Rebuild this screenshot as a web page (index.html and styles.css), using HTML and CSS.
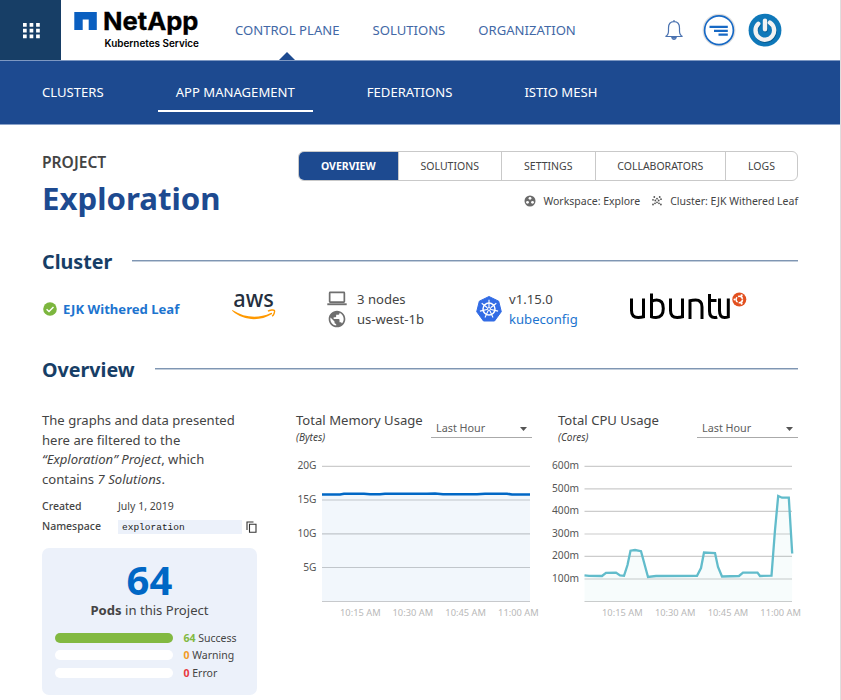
FILE: index.html
```html
<!DOCTYPE html>
<html lang="en">
<head>
<meta charset="utf-8">
<title>Exploration – NetApp Kubernetes Service</title>
<link rel="stylesheet" href="styles.css">
</head>
<body>
<div class="page">
  <header class="topbar">
    <div class="launcher">
      <svg width="17" height="16" viewBox="0 0 17 16" fill="#fff"><path d="M0 0h3.700v3.700H0zM6.600 0h3.700v3.700H6.600zM13.100 0h3.700v3.700h-3.700zM0 5.800h3.700v3.700H0zM6.600 5.800h3.700v3.700H6.600zM13.100 5.800h3.700v3.700h-3.700zM0 11.600h3.700v3.700H0zM6.600 11.600h3.700v3.700H6.600zM13.100 11.600h3.700v3.700h-3.700z"/></svg>
    </div>
    <svg class="brand" width="128" height="52" viewBox="74 0 128 52">
      <path d="M74.300 12h22.500v18H88.700V19.500H82.700V30H74.300z" fill="#0a5fc0"/>
      <text x="103" y="30.300" class="brand-name" textLength="95.500" lengthAdjust="spacingAndGlyphs">NetApp</text>
      <text x="104.500" y="47.300" class="brand-sub" textLength="94.500" lengthAdjust="spacingAndGlyphs">Kubernetes Service</text>
    </svg>
    <nav class="primary">
      <a class="current">CONTROL PLANE</a><a>SOLUTIONS</a><a>ORGANIZATION</a>
    </nav>
    <div class="tools">
      <svg width="20" height="22" viewBox="664 20 20 22" fill="none" stroke="#4a72b0" stroke-width="1.200"><path d="M674 21v2M665.500 37.500c2-1 3-3 3-5.500v-3c0-4 2-6.300 5.500-6.300s5.500 2.300 5.500 6.300v3c0 2.500 1 4.500 3 5.500z"/><path d="M671.800 38.500c.3 2.600 4.100 2.600 4.400 0z" fill="#7f9bc8"/></svg>
      <svg width="34" height="34" viewBox="702 13 34 34"><circle cx="719" cy="30.200" r="15.700" fill="none" stroke="#dedede" stroke-width="1.500"/><circle cx="719" cy="30.200" r="14.400" fill="#fff" stroke="#1769c5" stroke-width="1.700"/><path d="M709.500 26.800h18.300M714 30.800h13.800M718.500 34.700h9.300" stroke="#1769c5" stroke-width="2.200"/></svg>
      <svg width="34" height="34" viewBox="748 13 34 34" fill="none"><circle cx="765" cy="30.200" r="16.400" fill="#0f78b9"/><path d="M758.300 23.800a9.300 9.300 0 1 0 11.600-1.200M765 20.600v8.600" transform="translate(.6 1)" stroke="#075b91" stroke-width="4.400" stroke-linecap="round"/><path d="M758.300 23.800a9.300 9.300 0 1 0 11.600-1.200M765 20.600v8.600" stroke="#f2f2f2" stroke-width="4.400" stroke-linecap="round"/></svg>
    </div>
  </header>
  <nav class="secondary">
    <a>CLUSTERS</a><a class="active">APP MANAGEMENT</a><a>FEDERATIONS</a><a>ISTIO MESH</a>
  </nav>

  <main>
    <section class="project">
      <div class="project-title">
        <div class="kicker">PROJECT</div>
        <h1>Exploration</h1>
      </div>
      <div class="project-side">
        <div class="tabs"><a class="on">OVERVIEW</a><a>SOLUTIONS</a><a>SETTINGS</a><a>COLLABORATORS</a><a>LOGS</a></div>
        <div class="meta">
          <svg width="12" height="12" viewBox="0 0 12 12"><circle cx="6" cy="6" r="5.500" fill="#6b6b6b"/><g fill="#fff"><circle cx="6" cy="3.300" r="1.400"/><circle cx="3.500" cy="7.300" r="1.400"/><circle cx="8.500" cy="7.300" r="1.400"/></g></svg>
          <span class="workspace">Workspace: Explore</span>
          <svg width="10" height="10" viewBox="0 0 10 10" fill="#555"><circle cx="2.300" cy="1" r=".9"/><circle cx="7.700" cy="1" r=".9"/><circle cx="5" cy="2.700" r=".9"/><circle cx="1" cy="3.800" r=".9"/><circle cx="3.300" cy="4.500" r=".9"/><circle cx="6.700" cy="4.500" r=".9"/><circle cx="9" cy="3.200" r=".9"/><circle cx="5" cy="6.300" r=".9"/><circle cx="1" cy="8.500" r=".9"/><circle cx="3" cy="7.300" r=".9"/><circle cx="7" cy="7.300" r=".9"/><circle cx="8.900" cy="8.500" r=".9"/></svg>
          <span class="cluster-name">Cluster: EJK Withered Leaf</span>
        </div>
      </div>
    </section>

    <h2>Cluster</h2>
    <section class="cluster">
      <div class="health">
        <svg width="14" height="14" viewBox="0 0 14 14"><circle cx="7" cy="7" r="6.800" fill="#7cb63e"/><path d="M3.600 7.200l2.400 2.300 4.500-4.600" fill="none" stroke="#fff" stroke-width="1.400"/></svg>
        <a>EJK Withered Leaf</a>
      </div>
      <svg class="aws" width="46" height="40" viewBox="231 282 46 40"><text x="233.300" y="307" class="aws-text" textLength="40.500" lengthAdjust="spacingAndGlyphs">aws</text><path d="M232.800 310.200c12 7.800 26 8.500 38 2.700 1.200-.5 1.800.7.800 1.400-11.500 7.300-28.500 6.500-39.200-3.200-.5-.6-.1-1.200.4-.9z" fill="#f90"/><path d="M268 311.200c2-1.300 5.600-1.600 6.400-.8.600 1.100-.4 4.400-2.200 5.900" fill="none" stroke="#f90" stroke-width="1.400"/></svg>
      <div class="facts nodes">
        <svg width="20" height="16" viewBox="0 0 20 16" fill="#6f6f6f"><path fill-rule="evenodd" d="M3.200.5h13.600q1.400 0 1.400 1.400v8.700q0 1.400-1.400 1.400H3.200q-1.400 0-1.400-1.400V1.900Q1.800.5 3.200.5zM3.500 2.200v8.100h13V2.200z"/><path d="M.3 12.300h19.400v1.900H.3z"/></svg>
        <span>3 nodes</span>
        <svg width="20" height="20" viewBox="0 0 24 24" fill="#6f6f6f"><path d="M12 2C6.480 2 2 6.480 2 12s4.480 10 10 10 10-4.480 10-10S17.520 2 12 2zm-1 17.930c-3.950-.49-7-3.850-7-7.930 0-.62.080-1.210.21-1.790L9 15v1c0 1.100.9 2 2 2v1.930zm6.900-2.540c-.26-.81-1-1.390-1.900-1.390h-1v-3c0-.55-.45-1-1-1H8v-2h2c.55 0 1-.45 1-1V7h2c1.100 0 2-.9 2-2v-.41c2.930 1.190 5 4.060 5 7.410 0 2.080-.8 3.970-2.100 5.390z"/></svg>
        <span>us-west-1b</span>
      </div>
      <div class="kube">
        <svg width="26" height="26" viewBox="-13 -13 26 26"><path d="M0-12.500 9.700-7.800 12.300 2.700 5.500 12H-5.500L-12.300 2.700-9.700-7.800z" fill="#326ce5" stroke="#326ce5" stroke-linejoin="round"/><g fill="none" stroke="#fff"><circle r="6" stroke-width="1.500"/><path stroke-width="1.100" d="M0-9.300V-2M7.300-5.800 1.600-1.200M9.100 2.100 2 .5M4 8.400 .9 1.800M-4 8.400-.9 1.800M-9.100 2.100-2 .5M-7.300-5.800-1.600-1.200"/><circle r="1.500"/></g></svg>
        <div><span>v1.15.0</span><a>kubeconfig</a></div>
      </div>
      <svg class="ubuntu" width="120" height="34" viewBox="628 289 120 34" role="img" aria-label="ubuntu"><g fill="none" stroke="#000" stroke-width="3"><path d="M631.500 298.500v12q0 7 6.700 7 3 0 5.300-.7v-18.300M651.500 293.500v23.300q2 .7 4.500.7 7.300 0 7.300-9 0-8.500-6.500-8.500-3 0-5.300 1.500M670.500 298.500v12q0 7 6.700 7 3 0 5.300-.7v-18.300M690 319v-18.300q2.500-.7 5.700-.7 6.300 0 6.300 7v12M709.500 294v17q0 6.500 5 6.500 1.700 0 2.700-.4M709.500 300.500h7M719.500 298.500v12q0 7 5 7 2.200 0 3.800-.6v-18.400"/></g><circle cx="739.300" cy="299.500" r="7" fill="#e2501f"/><circle cx="739.300" cy="299.500" r="3.200" fill="none" stroke="#fff" stroke-width="1.500" stroke-dasharray="5.600 1.100"/><g fill="#fff"><circle cx="734.600" cy="299.500" r="1.100"/><circle cx="741.600" cy="295.400" r="1.100"/><circle cx="741.600" cy="303.600" r="1.100"/></g></svg>
    </section>

    <h2>Overview</h2>
    <section class="overview">
      <div class="summary">
        <p>The graphs and data presented<br>here are filtered to the<br><i>“Exploration” Project</i>, which<br>contains <i>7 Solutions</i>.</p>
        <dl>
          <dt>Created</dt><dd class="date">July 1, 2019</dd>
          <dt>Namespace</dt><dd class="ns"><code>exploration</code><svg width="11" height="12" viewBox="0 0 11 12" fill="none" stroke="#333" stroke-width="1.100"><path d="M1 9V1h6.500M3.500 3.200H10v8H3.500z"/></svg></dd>
        </dl>
        <div class="pods">
          <div class="count">64</div>
          <div class="caption"><b>Pods</b> in this Project</div>
          <div class="status"><i class="bar full"></i><span><b class="ok">64</b> Success</span></div>
          <div class="status"><i class="bar"></i><span><b class="warn">0</b> Warning</span></div>
          <div class="status"><i class="bar"></i><span><b class="err">0</b> Error</span></div>
        </div>
      </div>
      <div class="chart memory">
        <div class="chart-head">
          <div><h3>Total Memory Usage</h3><em>(Bytes)</em></div>
          <div class="select">Last Hour<svg width="7" height="4" viewBox="0 0 7 4"><path d="M0 0h7L3.500 4z" fill="#555"/></svg></div>
        </div>
        <svg class="plot" width="250" height="165" viewBox="296 455 250 165">
          <path d="M322 466.300h208M322 500h208M322 533.800h208M322 567.500h208M322 601.500h208" class="grid"/>
          <path d="M322 494.500H530V601.500H322z" fill="#0067c5" fill-opacity=".05"/>
          <path d="M322 494.500h18l4-.7h20l6 .5h10l5-.6h42l8-.2 8 .8h34l8-.6h22l5 .8h18" fill="none" stroke="#0067c5" stroke-width="2.500"/>
          <g class="ylab"><text x="316.500" y="469">20G</text><text x="316.500" y="503">15G</text><text x="316.500" y="537">10G</text><text x="316.500" y="571">5G</text></g>
          <g class="xlab"><text x="360.300" y="616">10:15 AM</text><text x="412.800" y="616">10:30 AM</text><text x="465.600" y="616">10:45 AM</text><text x="518.400" y="616">11:00 AM</text></g>
        </svg>
      </div>
      <div class="chart cpu">
        <div class="chart-head">
          <div><h3>Total CPU Usage</h3><em>(Cores)</em></div>
          <div class="select">Last Hour<svg width="7" height="4" viewBox="0 0 7 4"><path d="M0 0h7L3.500 4z" fill="#555"/></svg></div>
        </div>
        <svg class="plot" width="260" height="165" viewBox="548 455 260 165">
          <path d="M584.500 466.300H792M584.500 488.800H792M584.500 511.300H792M584.500 534H792M584.500 556.300H792M584.500 579H792M584.500 601.500H792" class="grid"/>
          <path d="M584.500 575.400 602 576 606 572.800 616 572.600 620 575.500 624 575.800 627.500 565 630.500 550.700 641 551.200 645 566 648 577 656 576 697 575.800 701 568 704 552.500 715 553 718 567 722 576.500 739 576 743 572.700 757.500 572.600 760 576 771.500 575.700 775 530 778.200 496 782 497.700 788.800 497.600 792.200 553.500V601.500H584.500z" fill="#62bccb" fill-opacity=".05"/>
          <path d="M584.500 575.400 589 575.800 602 576 606 572.800 616 572.600 620 575.500 624 575.800 627.500 565 630.500 550.700 635 550 641 551.200 645 566 648 577 656 576 697 575.800 701 568 704 552.500 715 553 718 567 722 576.500 739 576 743 572.700 757.500 572.600 760 576 771.500 575.700 775 530 778.200 496 782 497.700 788.800 497.600 792.200 553.500" fill="none" stroke="#62bccb" stroke-width="2.300"/>
          <g class="ylab"><text x="579" y="469">600m</text><text x="579" y="492">500m</text><text x="579" y="514">400m</text><text x="579" y="537">300m</text><text x="579" y="559">200m</text><text x="579" y="582">100m</text></g>
          <g class="xlab"><text x="622.300" y="616">10:15 AM</text><text x="675.200" y="616">10:30 AM</text><text x="728" y="616">10:45 AM</text><text x="780.600" y="616">11:00 AM</text></g>
        </svg>
      </div>
    </section>
  </main>
</div>
</body>
</html>
```
FILE: styles.css
```css
* { box-sizing: border-box; }
body { margin: 0; font-family: "Noto Sans", sans-serif; font-size: 13.100px; color: #444; background: #fff; overflow: hidden; }
a { white-space: nowrap; }
svg { display: block; flex: none; }
.page { width: 841px; height: 700px; overflow: hidden; border-right: 1px solid #dedede; }

.topbar { height: 61px; display: flex; align-items: flex-start; border-bottom: 1px solid #7d98c2; }
.launcher { width: 61px; height: 60px; background: #173e66; padding: 23px 0 0 23px; }
.brand { margin: 0 0 0 13px; }
.brand-name { font: 700 24.500px "Inter", sans-serif; fill: #000; stroke: #000; stroke-width: .3px; }
.brand-sub { font: 600 10px "Inter", sans-serif; fill: #000; }
.primary { display: flex; gap: 33px; margin-left: 33px; color: #4268a6; }
.primary a { height: 60px; line-height: 61px; display: block; position: relative; }
.primary .current::after { content: ""; position: absolute; left: 44px; bottom: 0; border: 8px solid transparent; border-top: 0; border-bottom-color: #1d4a90; }
.tools { margin: 13px 58px 0 auto; display: flex; align-items: center; gap: 12px; }
.tools svg:first-child { margin-right: 6px; }

.secondary { height: 64px; background: #1d4a90; border-bottom: 1px solid #8aa2c9; display: flex; color: #fff; padding-left: 42px; }
.secondary a { height: 51px; line-height: 63px; }
.secondary .active { margin: 0 54px; padding: 0 18px; border-bottom: 2px solid #fff; }
.secondary a:last-child { margin-left: 72px; }

main { padding: 0 42px; }
.project { display: flex; justify-content: space-between; height: 112px; }
.project-title { padding-top: 26px; }
.kicker { font-size: 15.600px; font-weight: 600; line-height: 22px; }
h1 { margin: 0; font-size: 31.200px; line-height: 50px; color: #1d4a90; font-weight: 700; }
.project-side { padding-top: 26px; width: 500px; }
.tabs { display: grid; grid-template-columns: 98.500px 103.500px 93.500px 130.500px 72px; height: 30px; border: 1px solid #c9c9c9; border-radius: 6px; overflow: hidden; font-size: 10.500px; line-height: 28px; text-align: center; }
.tabs a + a { border-left: 1px solid #c9c9c9; }
.tabs .on { background: #1d4a90; color: #fff; font-weight: 700; }
.meta { display: flex; align-items: center; justify-content: flex-end; height: 20px; margin-top: 10px; font-size: 10.500px; }
.workspace { margin: 0 12px 0 7px; }
.cluster-name { margin-left: 8px; }

h2 { display: flex; align-items: center; gap: 20px; margin: 0; height: 48px; font-size: 19.700px; color: #173e66; }
h2::after { content: ""; flex: 1; height: 2px; background: linear-gradient(#7f96b3 50%, #c3cedb 50%); }

.cluster { height: 60px; display: flex; align-items: flex-start; padding-top: 4px; }
.health { display: flex; align-items: center; gap: 6px; width: 189px; height: 40px; padding-left: 1px; color: #1d74cf; font-weight: 700; }
.health a { margin-top: -1px; }
.aws { margin-top: -7px; }
.aws-text { font: 500 23px "Noto Sans", sans-serif; fill: #252f3e; }
.facts { display: grid; grid-template-columns: 20px auto; column-gap: 10px; grid-template-rows: 20px 20px; align-items: center; line-height: 20px; }
.nodes { width: 149px; margin-left: 50px; }
.kube { display: flex; align-items: center; gap: 7px; width: 152px; height: 40px; }
.kube div { line-height: 20px; }
.kube span, .kube a { display: block; }
.kube a { color: #1d74cf; }

.overview { display: flex; padding-top: 18px; }
.summary { width: 215px; }
.summary p { margin: 0; line-height: 19.700px; white-space: nowrap; }
dl { margin: 6px 0 0; display: grid; grid-template-columns: 76px 1fr; grid-auto-rows: 20px; font-size: 10.500px; line-height: 20px; }
dt { font-weight: 500; }
dd { margin: 0; }
.ns { display: flex; align-items: center; justify-content: space-between; padding-top: 3px; }
code { width: 124px; height: 14px; background: #ecf1fa; padding-left: 4px; font: 9.500px/15px "Liberation Mono", monospace; color: #222; }
.pods { height: 147px; margin-top: 12px; border-radius: 7px; background: #ecf1fa; padding: 11px 13px 0; }
.count { font-size: 40px; line-height: 42px; font-weight: 700; color: #0067c5; text-align: center; }
.caption { text-align: center; line-height: 18px; margin-bottom: 10px; }
.status { display: flex; align-items: center; gap: 10.500px; height: 17.700px; font-size: 10.500px; white-space: nowrap; }
.bar { width: 118px; height: 10px; border-radius: 5px; background: #fff; }
.full { background: #82b941; }
.ok { color: #82b941; }
.warn { color: #f29b24; }
.err { color: #e8393c; }

.memory { width: 236px; margin-left: 39px; }
.cpu { width: 240px; margin-left: 26px; }
.chart-head { display: flex; justify-content: space-between; height: 44px; white-space: nowrap; }
h3 { margin: 0; font-size: 13.100px; line-height: 19px; font-weight: 400; }
.chart-head em { display: block; font-size: 10px; line-height: 14px; }
.select { width: 101px; height: 27px; padding: 8px 5px 0; border-bottom: 1px solid #aaa; font-size: 10.800px; line-height: 18px; display: flex; align-items: center; justify-content: space-between; color: #606060; }
.select svg { margin-top: 2px; }
.plot { overflow: visible; }
.cpu .plot { margin-left: -10px; }
.grid { fill: none; stroke: #ccc; stroke-width: 1.200; }
.ylab { font-size: 10.200px; fill: #555; text-anchor: end; }
.xlab { font-size: 9.300px; fill: #b9b9b9; text-anchor: middle; }
```
